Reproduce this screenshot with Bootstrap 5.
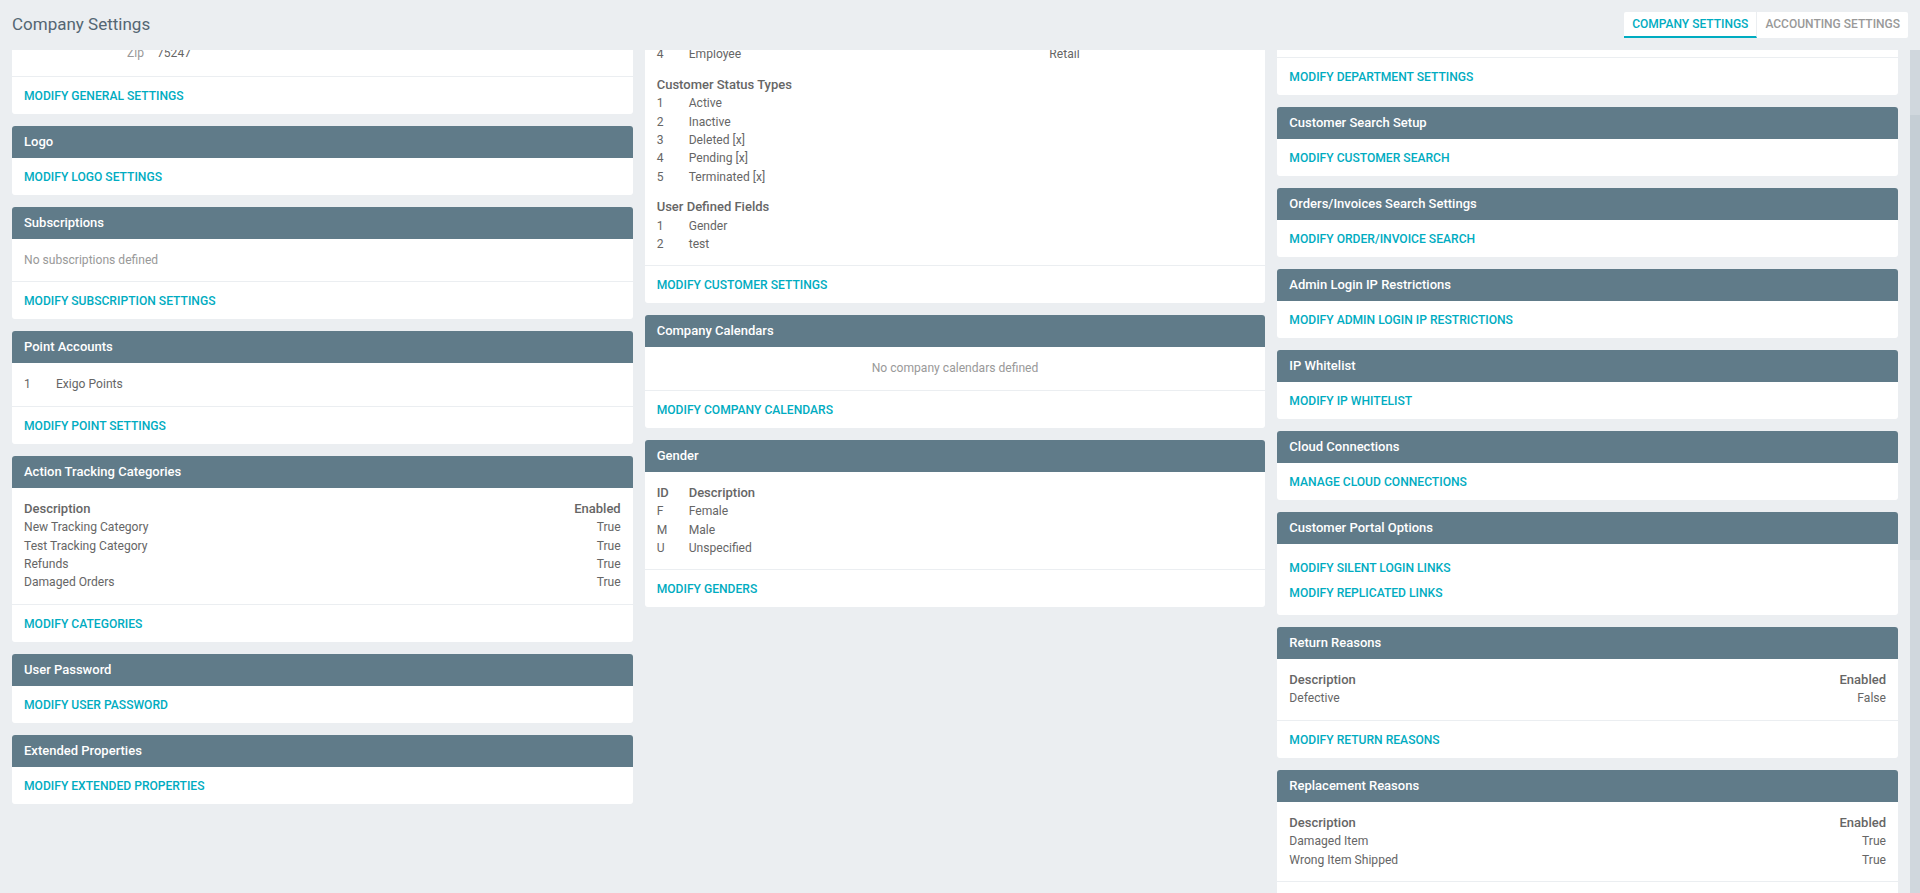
<!DOCTYPE html>
<html lang="en">
<head>
<meta charset="UTF-8">
<title>Company Settings</title>
<link href="https://cdn.jsdelivr.net/npm/bootstrap@5.3.3/dist/css/bootstrap.min.css" rel="stylesheet">
<script src="https://cdn.jsdelivr.net/npm/bootstrap@5.3.3/dist/js/bootstrap.bundle.min.js"></script>
<style>
html, body { height: 100%; overflow: hidden; }
body { background: #ebeef1; font-family: Roboto, sans-serif; font-size: 12.1px; line-height: 18.4px; color: #666; }
.page-head { height: 50px; padding: 12px 12px 0; }
.page-title { font-size: 17px; line-height: 24px; font-weight: 400; color: #546673; margin: 0; }
.head-tabs { background: #fff; border-radius: 2px; height: 26px; }
.head-tab { display: block; padding: 0 8px; height: 26px; line-height: 24px; font-size: 12px; font-weight: 500; text-transform: uppercase; color: #999; text-decoration: none; border-bottom: 2px solid transparent; }
.head-tab.on { color: #00acc1; border-bottom-color: #00acc1; border-right: 1px solid #ebeef1; }
.page-main { height: 843px; }
.scroll-area { flex: 1 1 0; min-width: 0; height: 843px; overflow: hidden; padding: 0 12px; }
.bar-track { width: 10px; flex: none; height: 843px; background: #d0d7dd; }
.bar-thumb { margin-top: 65px; height: 445px; background: #c5ced5; }
.col-row { display: flex; align-items: flex-start; gap: 12px; min-height: 1597px; }
.col-stack { display: flex; flex-direction: column; gap: 12px; flex: 1 1 0; min-width: 0; }
.set-card { border-radius: 3px; background: #fff; overflow: hidden; }
.set-card > h6 { background: #607b89; color: #fff; font-size: 13px; line-height: 32px; height: 32px; font-weight: 500; padding: 0 12px; margin: 0; }
.set-body { padding: 12px; border-bottom: 1px solid #ebeef1; }
.set-foot { padding: 10px 12px 9px; height: 37px; }
.set-foot a, .multi-links a { font-size: 12.1px; line-height: 18px; font-weight: 500; text-transform: uppercase; color: #00acc1; text-decoration: none; display: block; }
.multi-links { padding: 15px 12px 13px; height: 71px; display: flex; flex-direction: column; gap: 7px; }
.muted-note { color: #999; }
.data-row { display: flex; }
.data-row > span:first-child { width: 32px; flex: none; }
.two-side { display: flex; justify-content: space-between; }
.strong-row, .sub-title { font-size: 13px; font-weight: 500; }
.sub-title { margin: 12px 0 0; }
.price-col { width: 204px; flex: none; }
/* the top of each column is scrolled out of view */
.tail-left { padding-top: 116.6px; padding-bottom: 14px; }
.tail-mid { padding-top: 118.4px; }
.tail-right { height: 131px; }
.zip-label { width: 120px; text-align: right; margin-right: 13px; color: #999; }
</style>
</head>
<body>
<div class="page-head d-flex justify-content-between align-items-start">
    <h1 class="page-title">Company Settings</h1>
    <div class="head-tabs d-flex">
        <a class="head-tab on" href="#">Company Settings</a>
        <a class="head-tab" href="#">Accounting Settings</a>
    </div>
</div>
<div class="page-main d-flex">
<div class="scroll-area" id="scroller">
    <div class="col-row">

        <div class="col-stack">
            <div class="set-card">
                <div class="set-body tail-left">
                    <div class="d-flex"><span class="zip-label">Zip</span><span>75247</span></div>
                </div>
                <div class="set-foot"><a href="#">Modify General Settings</a></div>
            </div>
            <div class="set-card"><h6>Logo</h6><div class="set-foot"><a href="#">Modify Logo Settings</a></div></div>
            <div class="set-card">
                <h6>Subscriptions</h6>
                <div class="set-body muted-note">No subscriptions defined</div>
                <div class="set-foot"><a href="#">Modify Subscription Settings</a></div>
            </div>
            <div class="set-card">
                <h6>Point Accounts</h6>
                <div class="set-body"><div class="data-row"><span>1</span><span>Exigo Points</span></div></div>
                <div class="set-foot"><a href="#">Modify Point Settings</a></div>
            </div>
            <div class="set-card">
                <h6>Action Tracking Categories</h6>
                <div class="set-body">
                    <div class="two-side strong-row"><span>Description</span><span>Enabled</span></div>
                    <div class="two-side"><span>New Tracking Category</span><span>True</span></div>
                    <div class="two-side"><span>Test Tracking Category</span><span>True</span></div>
                    <div class="two-side"><span>Refunds</span><span>True</span></div>
                    <div class="two-side"><span>Damaged Orders</span><span>True</span></div>
                </div>
                <div class="set-foot"><a href="#">Modify Categories</a></div>
            </div>
            <div class="set-card"><h6>User Password</h6><div class="set-foot"><a href="#">Modify User Password</a></div></div>
            <div class="set-card"><h6>Extended Properties</h6><div class="set-foot"><a href="#">Modify Extended Properties</a></div></div>
        </div>

        <div class="col-stack">
            <div class="set-card">
                <div class="set-body tail-mid">
                    <div class="data-row"><span>4</span><span class="flex-fill">Employee</span><span class="price-col">Retail</span></div>
                    <p class="sub-title">Customer Status Types</p>
                    <div class="data-row"><span>1</span><span>Active</span></div>
                    <div class="data-row"><span>2</span><span>Inactive</span></div>
                    <div class="data-row"><span>3</span><span>Deleted [x]</span></div>
                    <div class="data-row"><span>4</span><span>Pending [x]</span></div>
                    <div class="data-row"><span>5</span><span>Terminated [x]</span></div>
                    <p class="sub-title">User Defined Fields</p>
                    <div class="data-row"><span>1</span><span>Gender</span></div>
                    <div class="data-row"><span>2</span><span>test</span></div>
                </div>
                <div class="set-foot"><a href="#">Modify Customer Settings</a></div>
            </div>
            <div class="set-card">
                <h6>Company Calendars</h6>
                <div class="set-body muted-note text-center">No company calendars defined</div>
                <div class="set-foot"><a href="#">Modify Company Calendars</a></div>
            </div>
            <div class="set-card">
                <h6>Gender</h6>
                <div class="set-body">
                    <div class="data-row strong-row"><span>ID</span><span>Description</span></div>
                    <div class="data-row"><span>F</span><span>Female</span></div>
                    <div class="data-row"><span>M</span><span>Male</span></div>
                    <div class="data-row"><span>U</span><span>Unspecified</span></div>
                </div>
                <div class="set-foot"><a href="#">Modify Genders</a></div>
            </div>
        </div>

        <div class="col-stack">
            <div class="set-card">
                <div class="set-body tail-right"></div>
                <div class="set-foot"><a href="#">Modify Department Settings</a></div>
            </div>
            <div class="set-card"><h6>Customer Search Setup</h6><div class="set-foot"><a href="#">Modify Customer Search</a></div></div>
            <div class="set-card"><h6>Orders/Invoices Search Settings</h6><div class="set-foot"><a href="#">Modify Order/Invoice Search</a></div></div>
            <div class="set-card"><h6>Admin Login IP Restrictions</h6><div class="set-foot"><a href="#">Modify Admin Login IP Restrictions</a></div></div>
            <div class="set-card"><h6>IP Whitelist</h6><div class="set-foot"><a href="#">Modify IP Whitelist</a></div></div>
            <div class="set-card"><h6>Cloud Connections</h6><div class="set-foot"><a href="#">Manage Cloud Connections</a></div></div>
            <div class="set-card">
                <h6>Customer Portal Options</h6>
                <div class="multi-links"><a href="#">Modify Silent Login Links</a><a href="#">Modify Replicated Links</a></div>
            </div>
            <div class="set-card">
                <h6>Return Reasons</h6>
                <div class="set-body">
                    <div class="two-side strong-row"><span>Description</span><span>Enabled</span></div>
                    <div class="two-side"><span>Defective</span><span>False</span></div>
                </div>
                <div class="set-foot"><a href="#">Modify Return Reasons</a></div>
            </div>
            <div class="set-card">
                <h6>Replacement Reasons</h6>
                <div class="set-body">
                    <div class="two-side strong-row"><span>Description</span><span>Enabled</span></div>
                    <div class="two-side"><span>Damaged Item</span><span>True</span></div>
                    <div class="two-side"><span>Wrong Item Shipped</span><span>True</span></div>
                </div>
                <div class="set-foot"></div>
            </div>
        </div>

    </div>
</div>
<div class="bar-track"><div class="bar-thumb"></div></div>
</div>
<script>
    // the reference is photographed a little way down the settings
    document.getElementById("scroller").scrollTop = 123;
</script>
</body>
</html>
